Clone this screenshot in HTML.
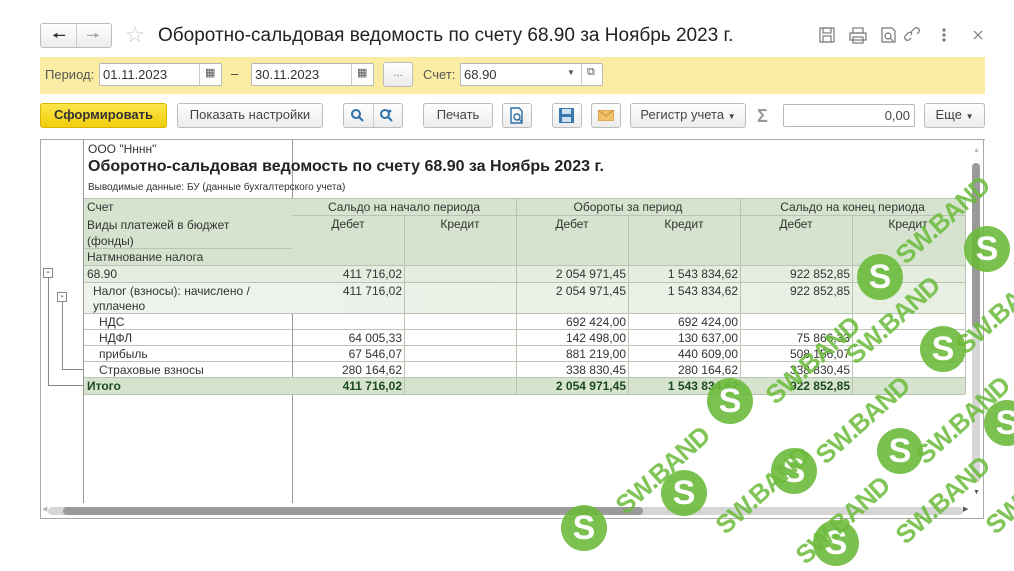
<!DOCTYPE html>
<html><head><meta charset="utf-8">
<style>
*{box-sizing:border-box;margin:0;padding:0}
body{width:1014px;height:540px;background:#fff;font-family:"Liberation Sans",Arial,sans-serif;color:#333;position:relative;overflow:hidden}
.a{position:absolute}
.btn{position:absolute;border:1px solid #bcbcbc;border-radius:3px;background:linear-gradient(#fff,#ececec);font-size:13px;color:#444;text-align:center;line-height:22px;height:24px}
.inp{position:absolute;border:1px solid #b8b8b8;border-radius:2px;background:#fff;height:23px;font-size:13px;line-height:21px;padding-left:3px;color:#333}
.t{position:absolute;font-size:12px;color:#333;white-space:nowrap}
.r{text-align:right}
.hl{position:absolute;height:1px;background:#b9c4b4}
.vl{position:absolute;width:1px;background:#b9c4b4}
.wm{position:absolute;color:#6cbb3c;font-weight:bold;font-size:26px;font-family:"Liberation Sans",sans-serif;transform:rotate(-42deg);white-space:nowrap;opacity:.85;letter-spacing:-1px}
.wc{position:absolute;width:46px;height:46px;border-radius:50%;background:#6cbb3c;color:#fff;font-weight:bold;font-size:34px;line-height:46px;text-align:center;opacity:.9}
</style></head><body>
<div class="btn" style="left:40px;top:23px;width:72px;height:25px"></div>
<div class="a" style="left:76px;top:24px;width:1px;height:23px;background:#ccc"></div>
<div class="a" style="left:52px;top:25px;font-size:16px;color:#333">&#129044;</div>
<div class="a" style="left:86px;top:25px;font-size:16px;color:#aaa">&#129046;</div>
<div class="a" style="left:125px;top:22px;font-size:22px;color:#ccc">☆</div>
<div class="a" style="left:158px;top:25px;font-size:19px;color:#222">Оборотно-сальдовая ведомость по счету 68.90 за Ноябрь 2023 г.</div>
<svg class="a" style="left:818px;top:26px" width="170" height="20" fill="none" stroke="#777" stroke-width="1.2">
<rect x="2" y="2" width="14" height="14"/><rect x="5" y="2" width="8" height="5"/><rect x="5" y="10" width="8" height="6"/>
<rect x="32" y="7" width="16" height="7"/><rect x="35" y="2" width="10" height="5"/><rect x="35" y="11" width="10" height="6"/>
<path d="M64 2h10l3 3v11H64z"/><circle cx="70" cy="10" r="3"/><path d="M72 12l3 3"/>
<path d="M93 12l-2 2a3 3 0 0 1-4-4l3-3a3 3 0 0 1 4 0M99 8l2-2a3 3 0 0 0-4-4l-3 3a3 3 0 0 0 0 4"/>
<circle cx="126" cy="4" r="1" fill="#777"/><circle cx="126" cy="9" r="1" fill="#777"/><circle cx="126" cy="14" r="1" fill="#777"/>
<path d="M156 5l8 8M164 5l-8 8"/>
</svg>
<div class="a" style="left:40px;top:57px;width:945px;height:37px;background:#fbeca4"></div>
<div class="t" style="left:45px;top:67px;font-size:13px;color:#555">Период:</div>
<div class="inp" style="left:99px;top:63px;width:123px">01.11.2023</div>
<div class="a" style="left:199px;top:64px;width:1px;height:21px;background:#ccc"></div>
<div class="t" style="left:205px;top:66px;font-size:11px;color:#555">▦</div>
<div class="t" style="left:231px;top:66px;font-size:13px">–</div>
<div class="inp" style="left:251px;top:63px;width:123px">30.11.2023</div>
<div class="a" style="left:351px;top:64px;width:1px;height:21px;background:#ccc"></div>
<div class="t" style="left:357px;top:66px;font-size:11px;color:#555">▦</div>
<div class="btn" style="left:383px;top:62px;width:30px;height:25px;line-height:20px;font-size:11px;color:#777">...</div>
<div class="t" style="left:423px;top:67px;font-size:13px;color:#555">Счет:</div>
<div class="inp" style="left:460px;top:63px;width:143px">68.90</div>
<div class="a" style="left:581px;top:64px;width:1px;height:21px;background:#ccc"></div>
<div class="t" style="left:567px;top:68px;font-size:8px;color:#555">▼</div>
<div class="t" style="left:587px;top:66px;font-size:11px;color:#555">⧉</div>
<div class="btn" style="left:40px;top:103px;width:127px;height:25px;background:linear-gradient(#fce64a,#f1cd0c);border-color:#d9b500;font-weight:bold;color:#333;font-size:13px">Сформировать</div>
<div class="btn" style="left:177px;top:103px;width:146px;height:25px">Показать настройки</div>
<div class="btn" style="left:343px;top:103px;width:60px;height:25px"></div>
<div class="a" style="left:373px;top:104px;width:1px;height:23px;background:#ccc"></div>
<svg class="a" style="left:349px;top:108px" width="50" height="16" fill="none" stroke="#2a6fa8" stroke-width="2"><circle cx="7" cy="6" r="4"/><path d="M10 9l4 4"/><circle cx="36" cy="6" r="4"/><path d="M39 9l4 4M40 2l2 2"/></svg>
<div class="btn" style="left:423px;top:103px;width:70px;height:25px">Печать</div>
<div class="btn" style="left:502px;top:103px;width:30px;height:25px"></div>
<svg class="a" style="left:509px;top:107px" width="16" height="17" fill="none" stroke="#2a6fa8" stroke-width="1.4"><path d="M2 1h8l3 3v12H2z"/><circle cx="8" cy="10" r="3"/><path d="M10 12l3 3"/></svg>
<div class="btn" style="left:552px;top:103px;width:30px;height:25px"></div>
<svg class="a" style="left:559px;top:108px" width="16" height="15"><rect x="0" y="0" width="15" height="15" fill="#3c77b0"/><rect x="3" y="1" width="9" height="5" fill="#cfe0f0"/><rect x="3" y="9" width="9" height="5" fill="#cfe0f0"/></svg>
<div class="btn" style="left:591px;top:103px;width:30px;height:25px"></div>
<svg class="a" style="left:598px;top:110px" width="16" height="11"><rect x="0" y="0" width="16" height="11" fill="#f2c26b" stroke="#c8913a"/><path d="M0 0l8 6 8-6" stroke="#c8913a" fill="none"/></svg>
<div class="btn" style="left:630px;top:103px;width:116px;height:25px">Регистр учета <span style="font-size:8px">▼</span></div>
<div class="t" style="left:757px;top:106px;font-size:18px;color:#999;font-weight:bold">Σ</div>
<div class="inp" style="left:783px;top:104px;width:132px;text-align:right;padding-right:4px;color:#444">0,00</div>
<div class="btn" style="left:924px;top:103px;width:61px;height:25px">Еще <span style="font-size:8px">▼</span></div>
<div class="a" style="left:40px;top:139px;width:945px;height:1px;background:#aaa"></div>
<div class="a" style="left:40px;top:139px;width:944px;height:380px;border:1px solid #aaa;border-top:none"></div>
<div class="vl" style="left:83px;top:140px;height:363px;background:#999"></div>
<div class="vl" style="left:292px;top:140px;height:363px;background:#999"></div>
<div class="t" style="left:88px;top:142px">ООО "Нннн"</div>
<div class="t" style="left:88px;top:158px;font-size:16px;font-weight:bold;color:#222">Оборотно-сальдовая ведомость по счету 68.90 за Ноябрь 2023 г.</div>
<div class="t" style="left:88px;top:182px;font-size:10px">Выводимые данные: БУ (данные бухгалтерского учета)</div>
<div class="a" style="left:84px;top:198px;width:881px;height:67px;background:#d6e4cf"></div>
<div class="a" style="left:84px;top:265px;width:881px;height:17px;background:#e4ede0"></div>
<div class="a" style="left:84px;top:282px;width:881px;height:31px;background:linear-gradient(90deg,#eef4ec,#e7efe3)"></div>
<div class="a" style="left:84px;top:377px;width:881px;height:17px;background:#d6e4cf"></div>
<div class="hl" style="left:84px;top:198px;width:881px"></div>
<div class="hl" style="left:292px;top:215px;width:673px"></div>
<div class="hl" style="left:84px;top:248px;width:208px"></div>
<div class="hl" style="left:84px;top:265px;width:881px"></div>
<div class="hl" style="left:84px;top:282px;width:881px"></div>
<div class="hl" style="left:84px;top:313px;width:881px"></div>
<div class="hl" style="left:84px;top:329px;width:881px"></div>
<div class="hl" style="left:84px;top:345px;width:881px"></div>
<div class="hl" style="left:84px;top:361px;width:881px"></div>
<div class="hl" style="left:84px;top:377px;width:881px"></div>
<div class="hl" style="left:84px;top:394px;width:881px"></div>
<div class="vl" style="left:404px;top:215px;height:179px"></div>
<div class="vl" style="left:516px;top:198px;height:196px"></div>
<div class="vl" style="left:628px;top:215px;height:179px"></div>
<div class="vl" style="left:740px;top:198px;height:196px"></div>
<div class="vl" style="left:852px;top:215px;height:179px"></div>
<div class="vl" style="left:965px;top:198px;height:196px"></div>
<div class="t" style="left:87px;top:200px">Счет</div>
<div class="t" style="left:87px;top:217px;line-height:16px;white-space:normal;width:170px">Виды платежей в бюджет (фонды)</div>
<div class="t" style="left:87px;top:250px">Натмнование налога</div>
<div class="t" style="left:292px;top:200px;width:224px;text-align:center">Сальдо на начало периода</div>
<div class="t" style="left:516px;top:200px;width:224px;text-align:center">Обороты за период</div>
<div class="t" style="left:740px;top:200px;width:225px;text-align:center">Сальдо на конец периода</div>
<div class="t" style="left:292px;top:217px;width:112px;text-align:center">Дебет</div>
<div class="t" style="left:404px;top:217px;width:112px;text-align:center">Кредит</div>
<div class="t" style="left:516px;top:217px;width:112px;text-align:center">Дебет</div>
<div class="t" style="left:628px;top:217px;width:112px;text-align:center">Кредит</div>
<div class="t" style="left:740px;top:217px;width:112px;text-align:center">Дебет</div>
<div class="t" style="left:852px;top:217px;width:112px;text-align:center">Кредит</div>
<div class="a" style="left:43px;top:268px;width:10px;height:10px;border:1px solid #888;font-size:10px;line-height:7px;text-align:center">-</div>
<div class="a" style="left:48px;top:278px;width:1px;height:107px;background:#888"></div>
<div class="a" style="left:48px;top:385px;width:35px;height:1px;background:#888"></div>
<div class="a" style="left:57px;top:292px;width:10px;height:10px;border:1px solid #888;font-size:10px;line-height:7px;text-align:center">-</div>
<div class="a" style="left:62px;top:302px;width:1px;height:67px;background:#888"></div>
<div class="a" style="left:62px;top:369px;width:21px;height:1px;background:#888"></div>
<div class="t" style="left:87px;top:267px">68.90</div>
<div class="t" style="left:93px;top:284px;line-height:15px">Налог (взносы): начислено /<br>уплачено</div>
<div class="t" style="left:99px;top:315px">НДС</div>
<div class="t" style="left:99px;top:331px">НДФЛ</div>
<div class="t" style="left:99px;top:347px">прибыль</div>
<div class="t" style="left:99px;top:363px">Страховые взносы</div>
<div class="t" style="left:87px;top:379px;font-weight:bold;color:#1d4a1d">Итого</div>
<div class="t r" style="left:292px;top:267px;width:110px">411 716,02</div>
<div class="t r" style="left:516px;top:267px;width:110px">2 054 971,45</div>
<div class="t r" style="left:628px;top:267px;width:110px">1 543 834,62</div>
<div class="t r" style="left:740px;top:267px;width:110px">922 852,85</div>
<div class="t r" style="left:292px;top:284px;width:110px">411 716,02</div>
<div class="t r" style="left:516px;top:284px;width:110px">2 054 971,45</div>
<div class="t r" style="left:628px;top:284px;width:110px">1 543 834,62</div>
<div class="t r" style="left:740px;top:284px;width:110px">922 852,85</div>
<div class="t r" style="left:516px;top:315px;width:110px">692 424,00</div>
<div class="t r" style="left:628px;top:315px;width:110px">692 424,00</div>
<div class="t r" style="left:292px;top:331px;width:110px">64 005,33</div>
<div class="t r" style="left:516px;top:331px;width:110px">142 498,00</div>
<div class="t r" style="left:628px;top:331px;width:110px">130 637,00</div>
<div class="t r" style="left:740px;top:331px;width:110px">75 866,33</div>
<div class="t r" style="left:292px;top:347px;width:110px">67 546,07</div>
<div class="t r" style="left:516px;top:347px;width:110px">881 219,00</div>
<div class="t r" style="left:628px;top:347px;width:110px">440 609,00</div>
<div class="t r" style="left:740px;top:347px;width:110px">508 156,07</div>
<div class="t r" style="left:292px;top:363px;width:110px">280 164,62</div>
<div class="t r" style="left:516px;top:363px;width:110px">338 830,45</div>
<div class="t r" style="left:628px;top:363px;width:110px">280 164,62</div>
<div class="t r" style="left:740px;top:363px;width:110px">338 830,45</div>
<div class="t r" style="left:292px;top:379px;width:110px;font-weight:bold;color:#1d4a1d">411 716,02</div>
<div class="t r" style="left:516px;top:379px;width:110px;font-weight:bold;color:#1d4a1d">2 054 971,45</div>
<div class="t r" style="left:628px;top:379px;width:110px;font-weight:bold;color:#1d4a1d">1 543 834,62</div>
<div class="t r" style="left:740px;top:379px;width:110px;font-weight:bold;color:#1d4a1d">922 852,85</div>
<div class="a" style="left:972px;top:163px;width:8px;height:320px;border-radius:4px;background:#d6d6d6"></div>
<div class="a" style="left:972px;top:163px;width:8px;height:165px;border-radius:4px;background:#9a9a9a"></div>
<div class="t" style="left:973px;top:147px;font-size:7px;color:#bbb">▲</div>
<div class="t" style="left:973px;top:489px;font-size:7px;color:#555">▼</div>
<div class="a" style="left:48px;top:507px;width:915px;height:8px;border-radius:4px;background:#d6d6d6"></div>
<div class="a" style="left:63px;top:507px;width:580px;height:8px;border-radius:4px;background:#9a9a9a"></div>
<div class="t" style="left:42px;top:505px;font-size:7px;color:#bbb">◀</div>
<div class="t" style="left:963px;top:505px;font-size:7px;color:#555">▶</div>
<div class="wc" style="left:857px;top:254px">S</div>
<div class="wc" style="left:964px;top:226px">S</div>
<div class="wc" style="left:920px;top:326px">S</div>
<div class="wc" style="left:707px;top:378px">S</div>
<div class="wc" style="left:877px;top:428px">S</div>
<div class="wc" style="left:771px;top:448px">S</div>
<div class="wc" style="left:984px;top:400px">S</div>
<div class="wc" style="left:661px;top:470px">S</div>
<div class="wc" style="left:561px;top:505px">S</div>
<div class="wc" style="left:813px;top:520px">S</div>
<div class="wm" style="left:885px;top:205px">SW.BAND</div>
<div class="wm" style="left:835px;top:305px">SW.BAND</div>
<div class="wm" style="left:945px;top:295px">SW.BAND</div>
<div class="wm" style="left:755px;top:345px">SW.BAND</div>
<div class="wm" style="left:905px;top:405px">SW.BAND</div>
<div class="wm" style="left:805px;top:405px">SW.BAND</div>
<div class="wm" style="left:605px;top:455px">SW.BAND</div>
<div class="wm" style="left:705px;top:475px">SW.BAND</div>
<div class="wm" style="left:885px;top:485px">SW.BAND</div>
<div class="wm" style="left:785px;top:505px">SW.BAND</div>
<div class="wm" style="left:975px;top:475px">SW.BAND</div>
</body></html>
